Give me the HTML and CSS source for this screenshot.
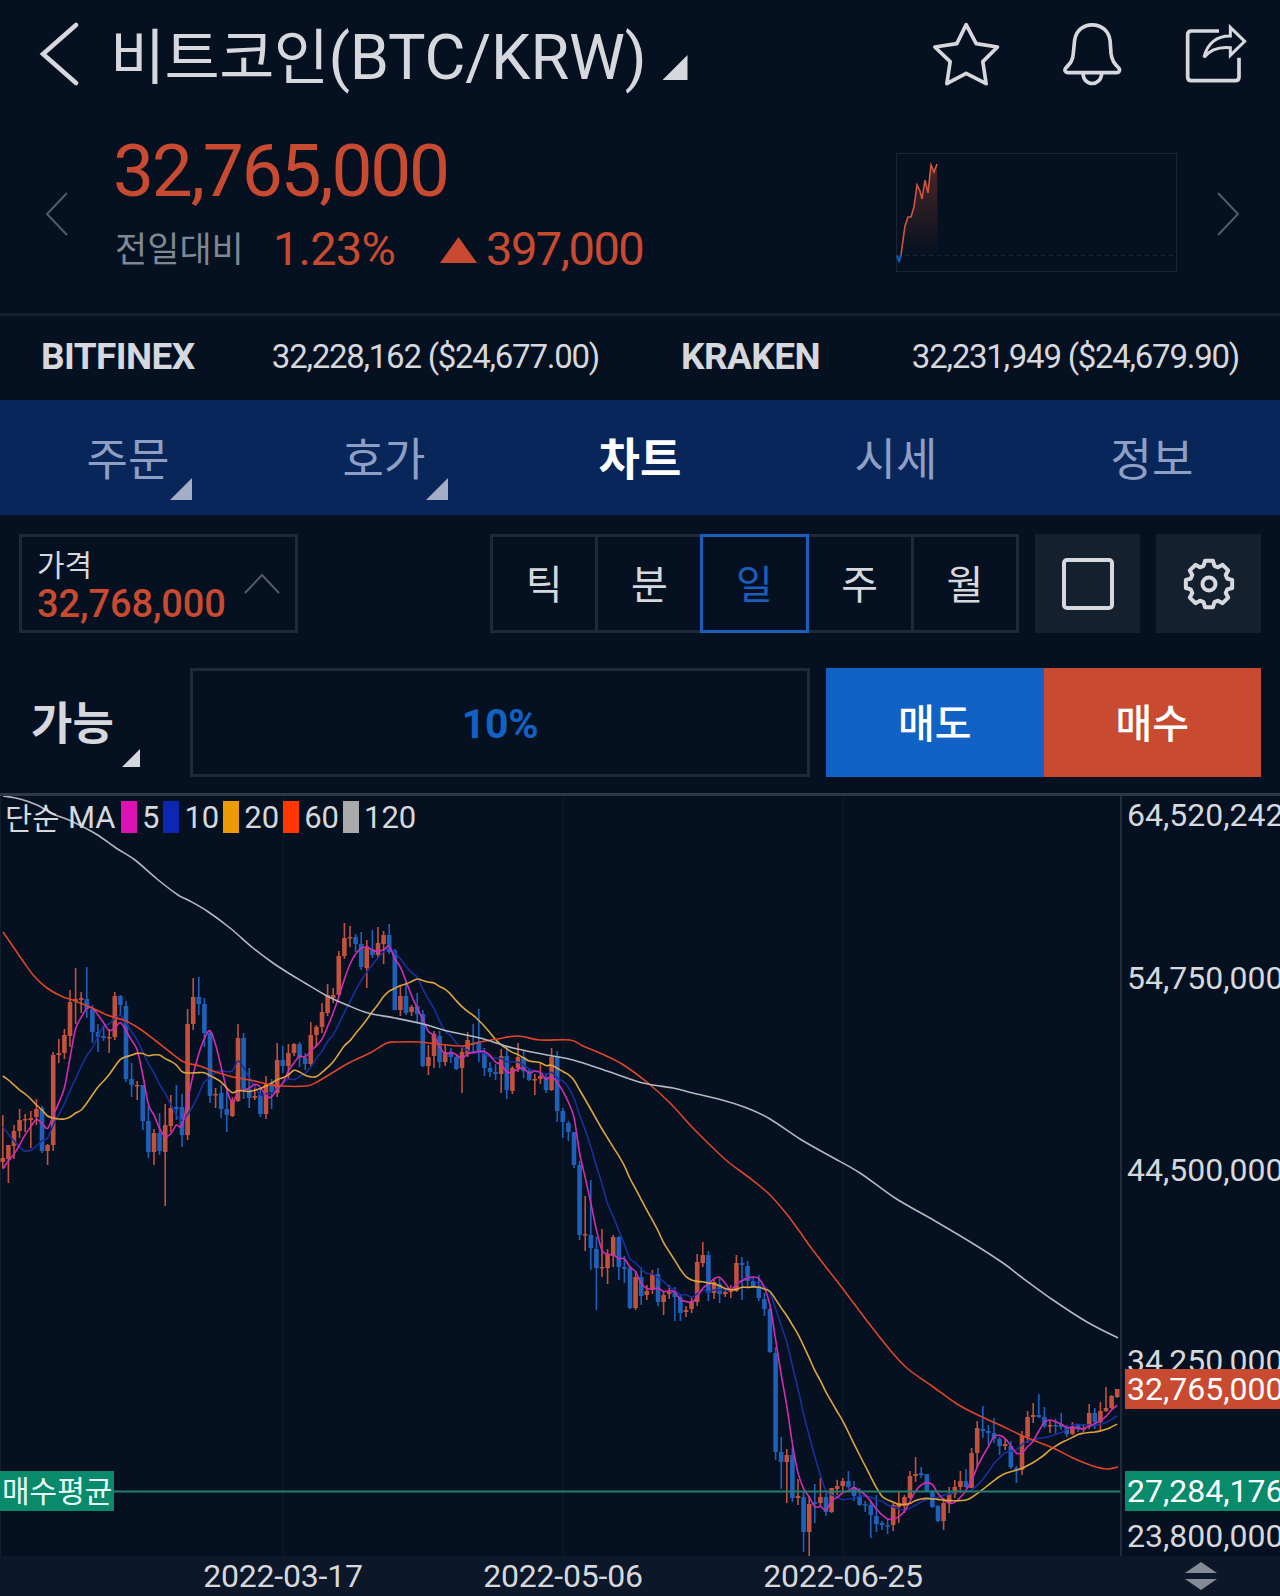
FILE: index.html
```html
<!DOCTYPE html>
<html lang="ko">
<head>
  <meta charset="UTF-8">
  <meta name="viewport" content="width=device-width, initial-scale=1.0">
  <title>비트코인(BTC/KRW)</title>
  <link rel="stylesheet" href="styles.css">
</head>
<body>
  <header class="header">
    <svg class="back" viewBox="0 0 44 66" width="44" height="66"><path d="M38 5 5 34l33 29"/></svg>
    <h1 class="title"><span class="title-ko">비트코인</span>(BTC/KRW)</h1>
    <i class="corner corner-title"></i>
    <div class="actions">
      <svg class="icon" viewBox="216 62 206 198" width="69" height="66"><path d="M318 73 348 130 412 140 368 184 378 250 318 219 260 250 270 184 224 140 290 130Z"/></svg>
      <svg class="icon" viewBox="602 62 184 198" width="61" height="66"><path d="M612 205C628 188 635 180 636 160L640 120C644 92 664 73 693 73S743 92 747 120L750 160C752 180 760 190 774 204 778 211 774 217 767 217H620C611 217 609 210 612 205Z"/><path d="M665 219C667 240 679 250 693 250S720 240 722 219"/></svg>
      <svg class="icon" viewBox="972 62 192 198" width="64" height="66"><path d="M1077 92H994Q983 92 983 103V230Q983 241 994 241H1126Q1137 241 1137 230V172"/><path class="arrow" d="M1032 171C1042 128 1072 106 1111 107V81L1154 123 1111 165V142C1078 139 1052 146 1032 171Z"/></svg>
    </div>
  </header>

  <section class="quote">
    <svg class="side" viewBox="0 0 24 44" width="24" height="44"><path d="M22 1 2 22l20 21"/></svg>
    <div class="quote-info">
      <div class="quote-price">32,765,000</div>
      <div class="quote-change">
        <span class="quote-label">전일대비</span>
        <span class="quote-rate">1.23%</span>
        <i class="up-mark"></i>
        <span class="quote-diff">397,000</span>
      </div>
    </div>
    <svg class="spark" viewBox="0 0 281 119" width="281" height="119">
      <defs>
        <linearGradient id="sparkFill" x1="0" y1="0" x2="0" y2="1">
          <stop offset="0" stop-color="#c84a31" stop-opacity=".36"/>
          <stop offset="1" stop-color="#c84a31" stop-opacity="0"/>
        </linearGradient>
      </defs>
      <rect class="spark-frame" x=".5" y=".5" width="280" height="118"/>
      <path class="spark-base" d="M1 102.500H280"/>
      <path fill="url(#sparkFill)" d="M5 102 9 73 12 64 15 64 18 54 21 32 24 38 26 46 29 27 32 40 35 12 38 19 41 11 42 102Z"/>
      <path class="spark-up" d="M5 102 9 73 12 64 15 64 18 54 21 32 24 38 26 46 29 27 32 40 35 12 38 19 41 11"/>
      <path class="spark-down" d="M1 102.500 3 108 5.300 102"/>
    </svg>
    <svg class="side" viewBox="0 0 24 44" width="24" height="44"><path d="M2 1l20 21L2 43"/></svg>
  </section>

  <section class="exchanges">
    <div class="exchange"><strong>BITFINEX</strong><span>32,228,162 ($24,677.00)</span></div>
    <div class="exchange"><strong>KRAKEN</strong><span>32,231,949 ($24,679.90)</span></div>
  </section>

  <nav class="tabs">
    <a class="tab">주문<i class="corner"></i></a>
    <a class="tab">호가<i class="corner"></i></a>
    <a class="tab active">차트</a>
    <a class="tab">시세</a>
    <a class="tab">정보</a>
  </nav>

  <div class="toolbar">
    <div class="price-box">
      <div>
        <div class="price-label">가격</div>
        <div class="price-value">32,768,000</div>
      </div>
      <svg class="caret" viewBox="0 0 36 22" width="36" height="22"><path d="M1 20 18 2l17 18"/></svg>
    </div>
    <div class="periods">
      <span class="period">틱</span>
      <span class="period">분</span>
      <span class="period selected">일</span>
      <span class="period">주</span>
      <span class="period">월</span>
    </div>
    <div class="tool">
      <svg class="icon" viewBox="0 0 52 52" width="52" height="52"><rect class="tool-shape" x="2" y="2" width="48" height="48" rx="3"/></svg>
    </div>
    <div class="tool">
      <svg class="icon" viewBox="0 0 52 52" width="52" height="52"><path id="gear" class="tool-shape"/><circle class="tool-shape" cx="26" cy="26" r="6.500"/></svg>
    </div>
  </div>

  <div class="order">
    <div class="order-type">가능<i class="corner"></i></div>
    <div class="order-ratio">10%</div>
    <div class="order-btn sell">매도</div>
    <div class="order-btn buy">매수</div>
  </div>

  <div class="chart">
    <svg id="plot" viewBox="0 796 1280 760" width="1280" height="760">
      <g id="grid"></g>
      <g id="candles"></g>
      <g id="lines"></g>
      <path class="avg-line" d="M0 1491.500H1121"/>
      <path class="axis-line" d="M1121 796V1556"/>
      <rect class="avg-fill" x="0" y="1471" width="114" height="40"/>
      <text class="tag-ko" x="2" y="1502">매수평균</text>
      <text class="axis" x="1127" y="826">64,520,242</text>
      <text class="axis" x="1127" y="989">54,750,000</text>
      <text class="axis" x="1127" y="1181">44,500,000</text>
      <text class="axis" x="1127" y="1372">34,250,000</text>
      <text class="axis" x="1127" y="1547">23,800,000</text>
      <rect class="now-fill" x="1125" y="1369" width="155" height="40"/>
      <text class="axis tag" x="1127" y="1400">32,765,000</text>
      <rect class="avg-fill" x="1125" y="1471" width="155" height="40"/>
      <text class="axis tag" x="1127" y="1502">27,284,176</text>
    </svg>
    <div class="legend">
      <span class="legend-ko">단순</span><span class="legend-name">MA</span>
      <i class="chip ma5"></i><span>5</span>
      <i class="chip ma10"></i><span>10</span>
      <i class="chip ma20"></i><span>20</span>
      <i class="chip ma60"></i><span>60</span>
      <i class="chip ma120"></i><span>120</span>
    </div>
  </div>

  <footer class="dates">
    <span>2022-03-17</span>
    <span>2022-05-06</span>
    <span>2022-06-25</span>
    <svg class="resize" viewBox="0 0 34 30" width="34" height="30"><path d="M17 1 33 12H1ZM17 29 1 18h32Z"/></svg>
  </footer>

  <script src="chart.js"></script>
</body>
</html>
```

FILE: styles.css
```css
* {
  box-sizing: border-box;
}
body {
  margin: 0;
  width: 1280px;
  height: 1596px;
  overflow: hidden;
  background-color: #051120;
  color: #d6d8dd;
  font-family: Roboto, "Noto Sans CJK KR", sans-serif;
}
svg {
  display: block;
  fill: none;
}
.corner {
  display: block;
  width: 22px;
  height: 22px;
  background-color: currentColor;
  clip-path: polygon(100% 0, 100% 100%, 0 100%);
}

/* header */
.header {
  display: flex;
  height: 108px;
  padding: 20px 32px 0 38px;
}
.back {
  stroke: #d6d8dd;
  stroke-width: 4.5;
  stroke-linecap: round;
}
.title {
  margin: 2px 0 0 28px;
  font-size: 63px;
  font-weight: 400;
  line-height: 72px;
  letter-spacing: -0.2px;
  white-space: nowrap;
}
.title-ko {
  font-size: 60px;
  letter-spacing: -0.6px;
}
.corner-title {
  width: 25px;
  height: 25px;
  margin: 35px 0 0 16px;
}
.actions {
  display: flex;
  gap: 61px;
  margin-left: auto;
}
.actions .icon {
  margin-top: 1px;
}
.icon {
  stroke: #d6d8dd;
  stroke-width: 11;
  stroke-linejoin: round;
}
.icon .arrow {
  stroke-width: 9;
  stroke-linejoin: miter;
}

/* quote */
.quote {
  display: flex;
  height: 208px;
  padding: 45px 40px 0 45px;
  border-bottom: 3px solid #15202e;
}
.side {
  margin-top: 39px;
  stroke: #535b66;
  stroke-width: 2;
}
.quote-info {
  width: 783px;
  margin: -24px 0 0 44px;
  color: #c84a31;
}
.quote-price {
  height: 84px;
  font-size: 73px;
  line-height: 84px;
  letter-spacing: -2.2px;
}
.quote-change {
  display: flex;
  align-items: center;
  height: 70px;
  padding-left: 2px;
  font-size: 47px;
}
.quote-label {
  width: 158px;
  margin-top: -3px;
  color: #7f8893;
  font-size: 35px;
}
.quote-rate {
  width: 167px;
  letter-spacing: -0.8px;
}
.up-mark {
  width: 37px;
  height: 26px;
  margin: 4px 9px 0 0;
  background-color: #c84a31;
  clip-path: polygon(50% 0, 100% 100%, 0 100%);
}
.quote-diff {
  letter-spacing: -1.5px;
}
.spark {
  margin-right: 39px;
}
.spark-frame {
  stroke: #1a2532;
}
.spark-base {
  stroke: #1a2532;
  stroke-dasharray: 4 4;
}
.spark-up {
  stroke: #d0553d;
  stroke-width: 1.6;
}
.spark-down {
  stroke: #1261c4;
  stroke-width: 2;
}

/* exchanges */
.exchanges {
  display: flex;
  height: 84px;
  padding-bottom: 3px;
}
.exchange {
  display: flex;
  align-items: center;
  justify-content: space-between;
  width: 640px;
  padding: 0 41px;
  font-size: 33px;
  letter-spacing: -1.25px;
}
.exchange strong {
  font-size: 37px;
  font-weight: 700;
  letter-spacing: -0.6px;
}

/* tabs */
.tabs {
  display: flex;
  height: 115px;
  background-color: #08265a;
}
.tab {
  position: relative;
  flex: 1;
  color: #8e9fc3;
  font-size: 45px;
  line-height: 121px;
  text-align: center;
}
.tab.active {
  color: #fff;
  font-weight: 700;
}
.tab .corner {
  position: absolute;
  right: 64px;
  bottom: 15px;
  color: #a3aec6;
}

/* toolbar */
.toolbar {
  display: flex;
  gap: 16px;
  padding: 19px 19px 0;
}
.price-box {
  display: flex;
  justify-content: space-between;
  width: 279px;
  height: 99px;
  margin-right: auto;
  padding: 10px 15px;
  border: 3px solid #1f2937;
}
.price-label {
  font-size: 30px;
  line-height: 38px;
}
.price-value {
  color: #c84a31;
  font-size: 38px;
  font-weight: 500;
  line-height: 38px;
  letter-spacing: -0.1px;
}
.caret {
  margin-top: 26px;
  stroke: #535b66;
  stroke-width: 2;
}
.periods {
  display: flex;
  width: 529px;
  height: 99px;
}
.period {
  flex: 1;
  margin-left: -3px;
  border: 3px solid #1f2937;
  font-size: 40px;
  line-height: 98px;
  text-align: center;
}
.period:first-child {
  margin-left: 0;
}
.period.selected {
  position: relative;
  border-color: #1b5db8;
  color: #1b5db8;
}
.tool {
  display: flex;
  align-items: center;
  justify-content: center;
  width: 105px;
  height: 99px;
  background-color: #15202e;
}
.tool-shape {
  stroke-width: 4;
}

/* order */
.order {
  display: flex;
  height: 109px;
  margin: 35px 19px 16px;
  line-height: 114px;
  text-align: center;
}
.order-type {
  position: relative;
  width: 171px;
  padding-left: 12px;
  font-size: 45px;
  font-weight: 700;
  text-align: left;
}
.order-type .corner {
  position: absolute;
  left: 103px;
  top: 81px;
  width: 18px;
  height: 18px;
}
.order-ratio {
  width: 620px;
  margin-right: 16px;
  border: 3px solid #1f2937;
  color: #1261c4;
  font-size: 41px;
  font-weight: 700;
  line-height: 107px;
  letter-spacing: -0.3px;
}
.order-btn {
  flex: 1;
  color: #fff;
  font-size: 40px;
  font-weight: 500;
}
.sell {
  background-color: #1261c4;
}
.buy {
  background-color: #c84a31;
}

/* chart */
.chart {
  position: relative;
  height: 763px;
  border-top: 3px solid #2d3745;
}
.legend {
  position: absolute;
  left: 5px;
  top: 3px;
  display: flex;
  align-items: center;
  height: 36px;
  font-size: 31px;
}
.legend-ko {
  width: 63px;
  margin-top: -3px;
  font-size: 29.5px;
}
.legend-name {
  width: 53px;
}
.chip {
  width: 16px;
  height: 32px;
  margin-right: 5px;
}
.chip + span {
  margin-right: 4px;
}
.ma5 {
  background-color: #dd12b5;
}
.ma10 {
  background-color: #0c27b0;
}
.ma20 {
  background-color: #eb9b04;
}
.ma60 {
  background-color: #ff3800;
}
.ma120 {
  background-color: #aaa;
}
.grid-line {
  stroke: #111e2c;
}
.up {
  fill: #c2523e;
}
.down {
  fill: #1f60b8;
}
.line {
  stroke-width: 1.6;
  stroke-linejoin: round;
}
.line-5 {
  stroke: #d32cb4;
}
.line-10 {
  stroke: #1a2f9e;
}
.line-20 {
  stroke: #e0a53a;
}
.line-60 {
  stroke: #e0452a;
}
.line-120 {
  stroke: #b4b8be;
}
.avg-line {
  stroke: #24806d;
  stroke-width: 2;
}
.axis-line {
  stroke: #2b3542;
  stroke-width: 1.5;
}
.avg-fill {
  fill: #088a6b;
}
.now-fill {
  fill: #c84a31;
}
.axis {
  fill: #d6d8dd;
  font-size: 32px;
}
.tag {
  fill: #fff;
}
.tag-ko {
  fill: #e8fffa;
  font-size: 30px;
}

/* date axis */
.dates {
  display: flex;
  align-items: center;
  height: 40px;
  padding-left: 143px;
  background-color: #0c182a;
  font-size: 32px;
  letter-spacing: -0.2px;
}
.dates span {
  width: 280px;
  text-align: center;
}
.resize {
  margin-left: 201px;
  fill: #858b96;
}
```

FILE: chart.js
```javascript
// [고가, 몸통 위, 몸통 아래, 저가, 상승 여부]
const candles = [
  [1115,1158,1162,1168,1],[1145,1145,1159,1183,1],[1125,1131,1146,1159,1],[1109,1120,1131,1138,1],[1114,1119,1120,1132,1],
  [1111,1118,1120,1148,1],[1099,1109,1117,1125,1],[1106,1108,1151,1153,0],[1144,1145,1151,1165,1],[1052,1055,1145,1151,1],
  [1039,1053,1055,1063,1],[1029,1035,1053,1059,1],[990,1002,1036,1047,1],[968,999,1001,1024,1],[992,998,1000,1013,1],
  [967,999,1009,1018,0],[1005,1009,1032,1043,0],[1024,1032,1037,1052,0],[1026,1036,1038,1041,0],[1029,1037,1038,1053,1],
  [992,996,1037,1040,1],[995,996,1005,1015,0],[1001,1006,1079,1082,0],[1063,1079,1085,1097,0],[1081,1085,1086,1100,1],
  [1085,1085,1121,1130,0],[1105,1121,1152,1158,0],[1129,1133,1152,1165,1],[1113,1133,1151,1155,0],[1104,1125,1152,1206,1],
  [1095,1108,1126,1132,1],[1085,1107,1109,1120,0],[1094,1107,1135,1147,0],[1009,1024,1135,1140,1],[978,997,1024,1030,1],
  [977,997,1004,1015,0],[998,1004,1033,1047,0],[1031,1033,1096,1103,0],[1088,1094,1095,1108,1],[1085,1093,1109,1118,0],
  [1088,1109,1115,1132,0],[1097,1100,1116,1117,1],[1024,1038,1101,1102,1],[1033,1038,1089,1099,0],[1068,1089,1098,1108,0],
  [1085,1096,1098,1100,1],[1088,1095,1114,1117,0],[1076,1084,1114,1119,1],[1079,1083,1092,1109,0],[1043,1060,1093,1097,1],
  [1046,1060,1066,1073,0],[1044,1053,1066,1079,1],[1043,1044,1053,1056,1],[1042,1044,1058,1067,0],[1053,1058,1064,1070,0],
  [1022,1035,1064,1067,1],[1025,1027,1035,1047,1],[1003,1012,1027,1033,1],[984,995,1013,1016,1],[988,995,998,1003,1],
  [951,956,995,997,1],[923,938,956,959,1],[926,937,938,947,1],[934,937,944,952,0],[932,944,967,970,0],
  [940,948,968,988,1],[930,949,955,958,0],[927,943,955,958,1],[931,935,944,964,1],[924,935,952,954,0],
  [949,951,1010,1010,0],[986,996,1010,1016,1],[980,996,1013,1015,0],[1005,1007,1012,1016,1],[993,1006,1014,1023,0],
  [1010,1014,1066,1067,0],[1045,1057,1066,1075,1],[1031,1034,1056,1068,1],[1031,1036,1062,1068,0],[1044,1052,1062,1066,1],
  [1048,1052,1057,1063,0],[1054,1057,1069,1070,0],[1048,1052,1068,1093,1],[1032,1040,1054,1057,1],[1024,1043,1044,1054,0],
  [1009,1043,1053,1062,0],[1048,1053,1068,1076,0],[1062,1068,1072,1077,0],[1064,1072,1074,1080,0],[1049,1056,1074,1093,1],
  [1046,1056,1090,1099,0],[1066,1068,1091,1094,1],[1043,1057,1068,1072,1],[1051,1057,1071,1078,0],[1069,1071,1080,1081,0],
  [1074,1079,1080,1095,1],[1063,1076,1079,1084,1],[1073,1077,1090,1093,0],[1048,1057,1090,1091,1],[1051,1056,1111,1122,0],
  [1108,1111,1122,1138,0],[1121,1123,1132,1141,0],[1132,1132,1165,1168,0],[1161,1165,1235,1240,0],[1196,1234,1235,1251,1],
  [1180,1235,1248,1270,0],[1237,1249,1268,1310,0],[1229,1267,1268,1277,1],[1249,1254,1268,1284,1],[1235,1237,1256,1267,1],
  [1236,1237,1267,1280,0],[1256,1267,1269,1283,0],[1266,1268,1308,1309,0],[1271,1277,1308,1310,1],[1267,1277,1296,1305,0],
  [1285,1291,1295,1300,1],[1270,1274,1290,1294,1],[1268,1274,1302,1306,0],[1292,1295,1302,1315,1],[1285,1292,1294,1299,1],
  [1287,1291,1297,1321,0],[1294,1297,1313,1321,0],[1306,1310,1312,1317,1],[1297,1301,1309,1313,1],[1254,1262,1302,1306,1],
  [1242,1255,1263,1267,1],[1251,1255,1293,1301,0],[1279,1282,1293,1299,1],[1278,1284,1294,1303,0],[1288,1292,1294,1297,1],
  [1285,1290,1292,1298,1],[1255,1263,1291,1292,1],[1257,1263,1265,1300,0],[1261,1266,1281,1287,0],[1277,1281,1286,1287,0],
  [1275,1286,1298,1301,0],[1293,1299,1309,1316,0],[1307,1309,1352,1353,0],[1347,1353,1452,1460,0],[1437,1452,1462,1489,0],
  [1449,1455,1462,1503,1],[1447,1455,1498,1502,0],[1479,1496,1498,1505,1],[1492,1497,1532,1552,0],[1496,1504,1532,1556,1],
  [1484,1502,1504,1523,0],[1478,1497,1503,1506,1],[1493,1497,1512,1516,0],[1488,1488,1512,1513,1],[1480,1486,1489,1495,1],
  [1478,1481,1486,1491,1],[1471,1481,1487,1489,0],[1481,1487,1496,1501,0],[1488,1496,1505,1506,0],[1501,1504,1505,1512,0],
  [1501,1505,1515,1538,0],[1495,1516,1524,1532,0],[1521,1523,1525,1530,0],[1519,1525,1526,1534,0],[1503,1505,1525,1531,1],
  [1492,1503,1507,1523,1],[1495,1497,1506,1513,1],[1471,1476,1498,1499,1],[1457,1474,1476,1482,1],[1467,1473,1475,1478,0],
  [1474,1474,1491,1492,0],[1490,1491,1507,1508,0],[1505,1506,1521,1522,0],[1498,1503,1521,1530,1],[1487,1494,1503,1513,1],
  [1480,1487,1494,1498,1],[1471,1481,1487,1493,1],[1469,1481,1487,1488,0],[1448,1453,1488,1488,1],[1421,1428,1453,1468,1],
  [1406,1429,1431,1438,0],[1425,1431,1433,1445,0],[1418,1433,1439,1443,0],[1437,1439,1446,1455,0],[1438,1444,1446,1450,1],
  [1441,1446,1467,1469,0],[1466,1468,1470,1483,0],[1431,1436,1470,1475,1],[1411,1417,1437,1443,1],[1403,1415,1417,1423,1],
  [1394,1415,1417,1418,0],[1407,1417,1426,1428,0],[1421,1425,1426,1433,1],[1419,1425,1426,1435,0],[1413,1424,1427,1430,0],
  [1425,1427,1434,1437,0],[1422,1426,1434,1435,1],[1424,1425,1429,1432,0],[1424,1428,1429,1432,1],[1404,1413,1427,1429,1],
  [1408,1413,1422,1429,0],[1402,1411,1422,1430,1],[1387,1408,1411,1412,1],[1395,1396,1408,1409,1],[1389,1389,1397,1398,1]
];

// 이동평균 앞부분 (캔들 범위 이전 데이터가 필요한 구간)
const lead = {
  5: [1169, 1161, 1154, 1145],
  10: [1127, 1134, 1141, 1147, 1151, 1150, 1146, 1141, 1138],
  20: [1076, 1080, 1085, 1090, 1094, 1099, 1105, 1110, 1116, 1118, 1119, 1119, 1117, 1113, 1110, 1103, 1095, 1087, 1081]
};

const ma60 = [[3,932],[12,945],[23,961],[34,976],[47,988],[61,996],[75,1001],[90,1007],[107,1015],[126,1021],[140,1029],[156,1041],[170,1052],[184,1062],[200,1066],[213,1071],[233,1077],[250,1080],[267,1084],[280,1086],[306,1086],[317,1082],[347,1064],[370,1053],[387,1043],[400,1042],[418,1042],[437,1044],[462,1046],[480,1042],[497,1039],[518,1036],[540,1040],[570,1040],[583,1046],[602,1054],[622,1064],[648,1083],[670,1103],[692,1127],[708,1143],[727,1161],[747,1176],[768,1193],[785,1212],[800,1232],[812,1249],[843,1289],[867,1321],[890,1350],[908,1369],[932,1386],[957,1404],[980,1416],[1000,1425],[1023,1436],[1053,1448],[1073,1458],[1093,1466],[1107,1469],[1118,1467]];
const ma120 = [[3,796],[20,799],[37,805],[53,814],[71,821],[96,834],[116,848],[135,860],[157,879],[178,895],[188,900],[207,911],[230,928],[253,948],[273,963],[290,974],[305,983],[327,996],[347,1005],[368,1013],[395,1018],[423,1024],[447,1031],[480,1038],[513,1048],[547,1055],[573,1060],[607,1071],[643,1083],[673,1088],[693,1093],[722,1100],[747,1108],[770,1119],[800,1139],[830,1156],[860,1173],[895,1198],[935,1221],[972,1243],[1003,1263],[1020,1276],[1053,1300],[1087,1322],[1118,1338]];

const STEP = 5.6;
const xAt = i => 2.8 + STEP * i;

function movingAverage(n) {
  const closes = candles.map(c => c[4] ? c[1] : c[2]);
  return closes.map((_, i) => {
    if (i < n - 1) return [xAt(i), lead[n][i]];
    let sum = 0;
    for (let k = i - n + 1; k <= i; k++) sum += closes[k];
    return [xAt(i), sum / n];
  });
}

// 점들을 부드러운 곡선으로 연결
function curve(p) {
  let d = `M${p[0][0]} ${p[0][1]}`;
  for (let i = 0; i < p.length - 1; i++) {
    const a = p[i - 1] || p[i], b = p[i], c = p[i + 1], e = p[i + 2] || c;
    d += `C${b[0] + (c[0] - a[0]) / 6} ${b[1] + (c[1] - a[1]) / 6} ${c[0] - (e[0] - b[0]) / 6} ${c[1] - (e[1] - b[1]) / 6} ${c[0]} ${c[1]}`;
  }
  return d;
}

document.getElementById('grid').innerHTML = [0.5, 283, 563, 843]
  .map(x => `<path class="grid-line" d="M${x} 796V1556"/>`).join('');

document.getElementById('candles').innerHTML = candles.map(([high, top, bottom, low, up], i) => {
  const x = xAt(i);
  return `<g class="${up ? 'up' : 'down'}">` +
    `<rect x="${x - 0.8}" y="${high}" width="1.6" height="${low - high}"/>` +
    `<rect x="${x - 2.3}" y="${top}" width="4.6" height="${Math.max(bottom - top, 1.5)}"/></g>`;
}).join('');

const series = { 120: ma120, 60: ma60, 20: movingAverage(20), 10: movingAverage(10), 5: movingAverage(5) };
document.getElementById('lines').innerHTML = [10, 5, 20, 60, 120]
  .map(n => `<path class="line line-${n}" d="${curve(series[n])}"/>`).join('');

// 설정 아이콘 톱니
const teeth = 8;
let gear = '';
for (let i = 0; i < teeth; i++) {
  [[-0.29, 19], [-0.17, 23.5], [0.17, 23.5], [0.29, 19]].forEach(([off, r]) => {
    const a = i * 2 * Math.PI / teeth + off - Math.PI / 2;
    gear += `${gear ? 'L' : 'M'}${26 + r * Math.cos(a)} ${26 + r * Math.sin(a)}`;
  });
}
document.getElementById('gear').setAttribute('d', gear + 'Z');
```
